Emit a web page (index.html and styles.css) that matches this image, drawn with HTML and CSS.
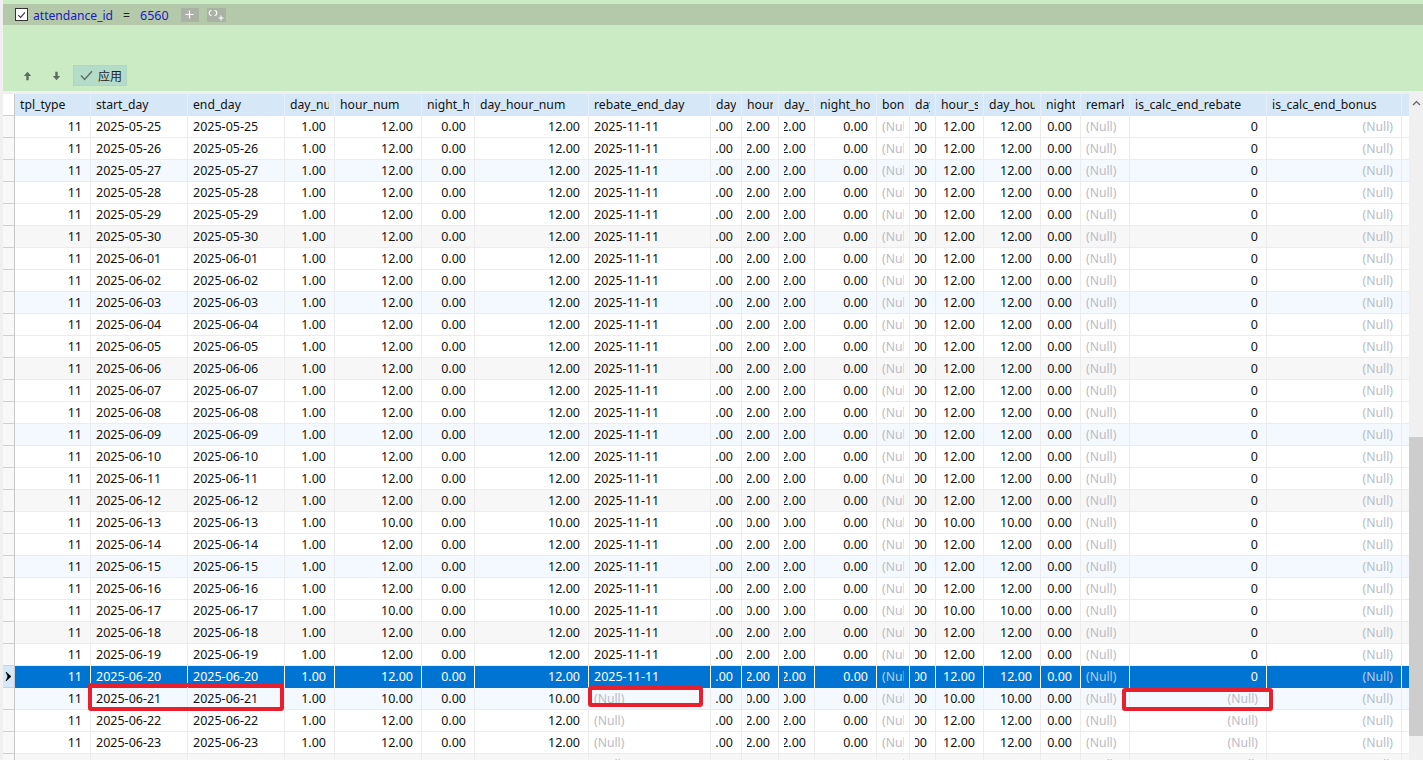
FILE: index.html
```html
<!DOCTYPE html>
<html lang="zh">
<head>
<meta charset="utf-8">
<title>attendance</title>
<link rel="stylesheet" href="styles.css">
</head>
<body>
<div class="page">
<section class="filter">
<div class="cond">
<span class="check"><svg width="12" height="12" viewBox="0 0 12 12"><path d="M2.5 6.2 5 8.6 9.8 3.2" fill="none" stroke="#333" stroke-width="1.2"/></svg></span>
<span class="field">attendance_id</span>
<span class="op">=</span>
<span class="val">6560</span>
<span class="mini"><svg width="9" height="9" viewBox="0 0 9 9"><path d="M4.5 0.5v8M0.5 4.5h8" stroke="#fff" stroke-width="1.2"/></svg></span>
<span class="mini wide"><svg width="17" height="12" viewBox="0 0 17 12"><path d="M3.5 1.5C1.8 1.5 1.2 2.8 1.2 4s.6 2.5 2.3 2.5M6.5 1.5C8.2 1.5 8.8 2.8 8.8 4S8.2 6.5 6.5 6.5" fill="none" stroke="#fff" stroke-width="1.2"/><path d="M13 6.5v5M10.5 9h5" stroke="#fff" stroke-width="1.1"/></svg></span>
</div>
<div class="actions">
<span class="arrow"><svg width="9" height="10" viewBox="0 0 9 10"><path d="M4.5 0.8 8.2 5H5.7v4.2H3.3V5H.8z" fill="#5d6d5f"/></svg></span>
<span class="arrow"><svg width="9" height="10" viewBox="0 0 9 10"><path d="M4.5 9.2 8.2 5H5.7V.8H3.3V5H.8z" fill="#5d6d5f"/></svg></span>
<span class="apply"><svg width="13" height="11" viewBox="0 0 13 11"><path d="M1 5.6 4.6 9.4 12 1.2" fill="none" stroke="#5f6f66" stroke-width="1.5"/></svg><span class="apply-label">应用</span></span>
</div>
</section>
<section class="table-wrap">
<div class="table">
<div class="row head"><span></span><span>tpl_type</span><span>start_day</span><span>end_day</span><span>day_num</span><span>hour_num</span><span>night_hour</span><span>day_hour_num</span><span>rebate_end_day</span><span>day_num</span><span>hour_num</span><span>day_hour</span><span>night_hour_num</span><span>bonus</span><span>day</span><span>hour_sum</span><span>day_hour_sum</span><span>night_hour</span><span>remark</span><span>is_calc_end_rebate</span><span>is_calc_end_bonus</span></div>
<div class="row"><span></span><span>11</span><span>2025-05-25</span><span>2025-05-25</span><span>1.00</span><span>12.00</span><span>0.00</span><span>12.00</span><span>2025-11-11</span><span>1.00</span><span>12.00</span><span>12.00</span><span>0.00</span><span class="n">(Null)</span><span>1.00</span><span>12.00</span><span>12.00</span><span>0.00</span><span class="n">(Null)</span><span>0</span><span class="n">(Null)</span></div>
<div class="row"><span></span><span>11</span><span>2025-05-26</span><span>2025-05-26</span><span>1.00</span><span>12.00</span><span>0.00</span><span>12.00</span><span>2025-11-11</span><span>1.00</span><span>12.00</span><span>12.00</span><span>0.00</span><span class="n">(Null)</span><span>1.00</span><span>12.00</span><span>12.00</span><span>0.00</span><span class="n">(Null)</span><span>0</span><span class="n">(Null)</span></div>
<div class="row blue"><span></span><span>11</span><span>2025-05-27</span><span>2025-05-27</span><span>1.00</span><span>12.00</span><span>0.00</span><span>12.00</span><span>2025-11-11</span><span>1.00</span><span>12.00</span><span>12.00</span><span>0.00</span><span class="n">(Null)</span><span>1.00</span><span>12.00</span><span>12.00</span><span>0.00</span><span class="n">(Null)</span><span>0</span><span class="n">(Null)</span></div>
<div class="row"><span></span><span>11</span><span>2025-05-28</span><span>2025-05-28</span><span>1.00</span><span>12.00</span><span>0.00</span><span>12.00</span><span>2025-11-11</span><span>1.00</span><span>12.00</span><span>12.00</span><span>0.00</span><span class="n">(Null)</span><span>1.00</span><span>12.00</span><span>12.00</span><span>0.00</span><span class="n">(Null)</span><span>0</span><span class="n">(Null)</span></div>
<div class="row"><span></span><span>11</span><span>2025-05-29</span><span>2025-05-29</span><span>1.00</span><span>12.00</span><span>0.00</span><span>12.00</span><span>2025-11-11</span><span>1.00</span><span>12.00</span><span>12.00</span><span>0.00</span><span class="n">(Null)</span><span>1.00</span><span>12.00</span><span>12.00</span><span>0.00</span><span class="n">(Null)</span><span>0</span><span class="n">(Null)</span></div>
<div class="row grey"><span></span><span>11</span><span>2025-05-30</span><span>2025-05-30</span><span>1.00</span><span>12.00</span><span>0.00</span><span>12.00</span><span>2025-11-11</span><span>1.00</span><span>12.00</span><span>12.00</span><span>0.00</span><span class="n">(Null)</span><span>1.00</span><span>12.00</span><span>12.00</span><span>0.00</span><span class="n">(Null)</span><span>0</span><span class="n">(Null)</span></div>
<div class="row"><span></span><span>11</span><span>2025-06-01</span><span>2025-06-01</span><span>1.00</span><span>12.00</span><span>0.00</span><span>12.00</span><span>2025-11-11</span><span>1.00</span><span>12.00</span><span>12.00</span><span>0.00</span><span class="n">(Null)</span><span>1.00</span><span>12.00</span><span>12.00</span><span>0.00</span><span class="n">(Null)</span><span>0</span><span class="n">(Null)</span></div>
<div class="row"><span></span><span>11</span><span>2025-06-02</span><span>2025-06-02</span><span>1.00</span><span>12.00</span><span>0.00</span><span>12.00</span><span>2025-11-11</span><span>1.00</span><span>12.00</span><span>12.00</span><span>0.00</span><span class="n">(Null)</span><span>1.00</span><span>12.00</span><span>12.00</span><span>0.00</span><span class="n">(Null)</span><span>0</span><span class="n">(Null)</span></div>
<div class="row blue"><span></span><span>11</span><span>2025-06-03</span><span>2025-06-03</span><span>1.00</span><span>12.00</span><span>0.00</span><span>12.00</span><span>2025-11-11</span><span>1.00</span><span>12.00</span><span>12.00</span><span>0.00</span><span class="n">(Null)</span><span>1.00</span><span>12.00</span><span>12.00</span><span>0.00</span><span class="n">(Null)</span><span>0</span><span class="n">(Null)</span></div>
<div class="row"><span></span><span>11</span><span>2025-06-04</span><span>2025-06-04</span><span>1.00</span><span>12.00</span><span>0.00</span><span>12.00</span><span>2025-11-11</span><span>1.00</span><span>12.00</span><span>12.00</span><span>0.00</span><span class="n">(Null)</span><span>1.00</span><span>12.00</span><span>12.00</span><span>0.00</span><span class="n">(Null)</span><span>0</span><span class="n">(Null)</span></div>
<div class="row"><span></span><span>11</span><span>2025-06-05</span><span>2025-06-05</span><span>1.00</span><span>12.00</span><span>0.00</span><span>12.00</span><span>2025-11-11</span><span>1.00</span><span>12.00</span><span>12.00</span><span>0.00</span><span class="n">(Null)</span><span>1.00</span><span>12.00</span><span>12.00</span><span>0.00</span><span class="n">(Null)</span><span>0</span><span class="n">(Null)</span></div>
<div class="row grey"><span></span><span>11</span><span>2025-06-06</span><span>2025-06-06</span><span>1.00</span><span>12.00</span><span>0.00</span><span>12.00</span><span>2025-11-11</span><span>1.00</span><span>12.00</span><span>12.00</span><span>0.00</span><span class="n">(Null)</span><span>1.00</span><span>12.00</span><span>12.00</span><span>0.00</span><span class="n">(Null)</span><span>0</span><span class="n">(Null)</span></div>
<div class="row"><span></span><span>11</span><span>2025-06-07</span><span>2025-06-07</span><span>1.00</span><span>12.00</span><span>0.00</span><span>12.00</span><span>2025-11-11</span><span>1.00</span><span>12.00</span><span>12.00</span><span>0.00</span><span class="n">(Null)</span><span>1.00</span><span>12.00</span><span>12.00</span><span>0.00</span><span class="n">(Null)</span><span>0</span><span class="n">(Null)</span></div>
<div class="row"><span></span><span>11</span><span>2025-06-08</span><span>2025-06-08</span><span>1.00</span><span>12.00</span><span>0.00</span><span>12.00</span><span>2025-11-11</span><span>1.00</span><span>12.00</span><span>12.00</span><span>0.00</span><span class="n">(Null)</span><span>1.00</span><span>12.00</span><span>12.00</span><span>0.00</span><span class="n">(Null)</span><span>0</span><span class="n">(Null)</span></div>
<div class="row blue"><span></span><span>11</span><span>2025-06-09</span><span>2025-06-09</span><span>1.00</span><span>12.00</span><span>0.00</span><span>12.00</span><span>2025-11-11</span><span>1.00</span><span>12.00</span><span>12.00</span><span>0.00</span><span class="n">(Null)</span><span>1.00</span><span>12.00</span><span>12.00</span><span>0.00</span><span class="n">(Null)</span><span>0</span><span class="n">(Null)</span></div>
<div class="row"><span></span><span>11</span><span>2025-06-10</span><span>2025-06-10</span><span>1.00</span><span>12.00</span><span>0.00</span><span>12.00</span><span>2025-11-11</span><span>1.00</span><span>12.00</span><span>12.00</span><span>0.00</span><span class="n">(Null)</span><span>1.00</span><span>12.00</span><span>12.00</span><span>0.00</span><span class="n">(Null)</span><span>0</span><span class="n">(Null)</span></div>
<div class="row"><span></span><span>11</span><span>2025-06-11</span><span>2025-06-11</span><span>1.00</span><span>12.00</span><span>0.00</span><span>12.00</span><span>2025-11-11</span><span>1.00</span><span>12.00</span><span>12.00</span><span>0.00</span><span class="n">(Null)</span><span>1.00</span><span>12.00</span><span>12.00</span><span>0.00</span><span class="n">(Null)</span><span>0</span><span class="n">(Null)</span></div>
<div class="row grey"><span></span><span>11</span><span>2025-06-12</span><span>2025-06-12</span><span>1.00</span><span>12.00</span><span>0.00</span><span>12.00</span><span>2025-11-11</span><span>1.00</span><span>12.00</span><span>12.00</span><span>0.00</span><span class="n">(Null)</span><span>1.00</span><span>12.00</span><span>12.00</span><span>0.00</span><span class="n">(Null)</span><span>0</span><span class="n">(Null)</span></div>
<div class="row"><span></span><span>11</span><span>2025-06-13</span><span>2025-06-13</span><span>1.00</span><span>10.00</span><span>0.00</span><span>10.00</span><span>2025-11-11</span><span>1.00</span><span>10.00</span><span>10.00</span><span>0.00</span><span class="n">(Null)</span><span>1.00</span><span>10.00</span><span>10.00</span><span>0.00</span><span class="n">(Null)</span><span>0</span><span class="n">(Null)</span></div>
<div class="row"><span></span><span>11</span><span>2025-06-14</span><span>2025-06-14</span><span>1.00</span><span>12.00</span><span>0.00</span><span>12.00</span><span>2025-11-11</span><span>1.00</span><span>12.00</span><span>12.00</span><span>0.00</span><span class="n">(Null)</span><span>1.00</span><span>12.00</span><span>12.00</span><span>0.00</span><span class="n">(Null)</span><span>0</span><span class="n">(Null)</span></div>
<div class="row blue"><span></span><span>11</span><span>2025-06-15</span><span>2025-06-15</span><span>1.00</span><span>12.00</span><span>0.00</span><span>12.00</span><span>2025-11-11</span><span>1.00</span><span>12.00</span><span>12.00</span><span>0.00</span><span class="n">(Null)</span><span>1.00</span><span>12.00</span><span>12.00</span><span>0.00</span><span class="n">(Null)</span><span>0</span><span class="n">(Null)</span></div>
<div class="row"><span></span><span>11</span><span>2025-06-16</span><span>2025-06-16</span><span>1.00</span><span>12.00</span><span>0.00</span><span>12.00</span><span>2025-11-11</span><span>1.00</span><span>12.00</span><span>12.00</span><span>0.00</span><span class="n">(Null)</span><span>1.00</span><span>12.00</span><span>12.00</span><span>0.00</span><span class="n">(Null)</span><span>0</span><span class="n">(Null)</span></div>
<div class="row"><span></span><span>11</span><span>2025-06-17</span><span>2025-06-17</span><span>1.00</span><span>10.00</span><span>0.00</span><span>10.00</span><span>2025-11-11</span><span>1.00</span><span>10.00</span><span>10.00</span><span>0.00</span><span class="n">(Null)</span><span>1.00</span><span>10.00</span><span>10.00</span><span>0.00</span><span class="n">(Null)</span><span>0</span><span class="n">(Null)</span></div>
<div class="row grey"><span></span><span>11</span><span>2025-06-18</span><span>2025-06-18</span><span>1.00</span><span>12.00</span><span>0.00</span><span>12.00</span><span>2025-11-11</span><span>1.00</span><span>12.00</span><span>12.00</span><span>0.00</span><span class="n">(Null)</span><span>1.00</span><span>12.00</span><span>12.00</span><span>0.00</span><span class="n">(Null)</span><span>0</span><span class="n">(Null)</span></div>
<div class="row"><span></span><span>11</span><span>2025-06-19</span><span>2025-06-19</span><span>1.00</span><span>12.00</span><span>0.00</span><span>12.00</span><span>2025-11-11</span><span>1.00</span><span>12.00</span><span>12.00</span><span>0.00</span><span class="n">(Null)</span><span>1.00</span><span>12.00</span><span>12.00</span><span>0.00</span><span class="n">(Null)</span><span>0</span><span class="n">(Null)</span></div>
<div class="row sel"><span><svg width="7" height="11" viewBox="0 0 7 11"><path d="M1 1 6 5.5 1 10 2.8 5.5z" fill="#000" stroke="#000" stroke-width=".6"/></svg></span><span>11</span><span>2025-06-20</span><span>2025-06-20</span><span>1.00</span><span>12.00</span><span>0.00</span><span>12.00</span><span>2025-11-11</span><span>1.00</span><span>12.00</span><span>12.00</span><span>0.00</span><span class="n">(Null)</span><span>1.00</span><span>12.00</span><span>12.00</span><span>0.00</span><span class="n">(Null)</span><span>0</span><span class="n">(Null)</span></div>
<div class="row blue"><span></span><span>11</span><span>2025-06-21</span><span>2025-06-21</span><span>1.00</span><span>10.00</span><span>0.00</span><span>10.00</span><span class="n">(Null)</span><span>1.00</span><span>10.00</span><span>10.00</span><span>0.00</span><span class="n">(Null)</span><span>1.00</span><span>10.00</span><span>10.00</span><span>0.00</span><span class="n">(Null)</span><span class="n">(Null)</span><span class="n">(Null)</span></div>
<div class="row"><span></span><span>11</span><span>2025-06-22</span><span>2025-06-22</span><span>1.00</span><span>12.00</span><span>0.00</span><span>12.00</span><span class="n">(Null)</span><span>1.00</span><span>12.00</span><span>12.00</span><span>0.00</span><span class="n">(Null)</span><span>1.00</span><span>12.00</span><span>12.00</span><span>0.00</span><span class="n">(Null)</span><span class="n">(Null)</span><span class="n">(Null)</span></div>
<div class="row"><span></span><span>11</span><span>2025-06-23</span><span>2025-06-23</span><span>1.00</span><span>12.00</span><span>0.00</span><span>12.00</span><span class="n">(Null)</span><span>1.00</span><span>12.00</span><span>12.00</span><span>0.00</span><span class="n">(Null)</span><span>1.00</span><span>12.00</span><span>12.00</span><span>0.00</span><span class="n">(Null)</span><span class="n">(Null)</span><span class="n">(Null)</span></div>
<div class="row grey"><span></span><span>11</span><span>2025-06-24</span><span>2025-06-24</span><span>1.00</span><span>12.00</span><span>0.00</span><span>12.00</span><span class="n">(Null)</span><span>1.00</span><span>12.00</span><span>12.00</span><span>0.00</span><span class="n">(Null)</span><span>1.00</span><span>12.00</span><span>12.00</span><span>0.00</span><span class="n">(Null)</span><span class="n">(Null)</span><span class="n">(Null)</span></div>
</div>
<div class="scrollbar">
<span class="up"><svg width="9" height="6" viewBox="0 0 9 6"><path d="M1 5 4.5 1.5 8 5" fill="none" stroke="#606060" stroke-width="1.2"/></svg></span>
<span class="thumb"></span>
</div>
</section>
<div class="mark mark-a"></div>
<div class="mark mark-b"></div>
<div class="mark mark-c"></div>
</div>
</body>
</html>
```

FILE: styles.css
```css
* { box-sizing: border-box; }
html, body { margin: 0; height: 760px; overflow: hidden; background: #f0f0f0; }
.page {
  position: relative;
  width: 1423px;
  height: 760px;
  overflow: hidden;
  padding-left: 3px;
  font: 12.5px/21px "Noto Sans", "Noto Sans CJK SC", sans-serif;
  color: #111;
}

/* filter panel */
.filter {
  height: 91px;
  padding-top: 4px;
  background: #cbebc5;
  display: flex;
  flex-direction: column;
}
.cond {
  height: 21px;
  background: #b3c9a9;
  display: flex;
  align-items: center;
  padding-left: 12px;
  font-size: 12.1px;
}
.check {
  width: 13px;
  height: 13px;
  border: 1px solid #333;
  background: #fff;
  display: flex;
  align-items: center;
  justify-content: center;
  margin-right: 5px;
}
.field, .op, .val { color: #1a1ac4; padding-top: 1px; }
.op { margin-left: 10px; color: #222; }
.val { margin-left: 10px; font-size: 12.5px; }
.mini {
  width: 18px;
  height: 14px;
  background: #a9b2a5;
  display: flex;
  align-items: center;
  justify-content: center;
  margin-left: 12px;
}
.mini.wide { width: 19px; margin-left: 8px; }
.actions {
  margin-top: auto;
  height: 21px;
  margin-bottom: 5px;
  display: flex;
  align-items: center;
  padding-left: 20px;
}
.arrow { width: 9px; height: 10px; display: flex; margin-right: 20px; }
.arrow + .apply { margin-left: -8px; }
.apply {
  width: 54px;
  height: 21px;
  background: #b4dcc9;
  border: 1px solid #aad8c6;
  display: flex;
  align-items: center;
  gap: 5px;
  padding-left: 6px;
  font-size: 12px;
  color: #222;
}
.apply-label { padding-top: 1px; }

/* data grid */
.table-wrap {
  display: flex;
  height: 669px;
  margin-top: 3px;
  overflow: hidden;
}
.table { width: 1406px; background: #fff; flex: none; }
.row {
  display: grid;
  grid-template-columns: 12px 76px 97px 97px 50px 87px 53px 114px 122px 31px 37px 36px 62px 33px 26px 48px 57px 40px 49px 137px 135px;
  height: 22px;
  border-bottom: 1px solid #ececec;
  white-space: nowrap;
}
.row > span {
  display: flex;
  justify-content: flex-end;
  padding: 0 8px 0 5px;
  border-right: 1px solid #ececec;
  overflow: clip;
  overflow-clip-margin: content-box;
}
.row > span:first-child {
  background: #f8f8f8;
  border-right-color: #c8c8c8;
  border-bottom: 1px solid #d0d0d0;
  height: 22px;
  padding: 0;
  align-items: center;
  justify-content: center;
}
.row > span:nth-child(3),
.row > span:nth-child(4),
.row > span:nth-child(9),
.row > span:nth-child(14),
.row > span:nth-child(19) { justify-content: flex-start; padding-right: 5px; }
.row > .n { color: #b9bcc6; font-size: 12.2px; }
.blue { background: #f3f9fe; }
.grey { background: #f7f7f7; }

.head { background: #d6e8f7; border-bottom: 0; font-size: 12.2px; }
.head > span {
  justify-content: flex-start;
  padding-right: 5px;
  border-right-color: #e6eff7;
}
.head > span:first-child { background: #fff; border-bottom: 1px solid #d0d0d0; }

.sel { background: #0074d3; color: #fff; border-bottom-color: #0074d3; }
.sel > span { border-right-color: #fff; }
.sel > span:first-child { background: #d6e8f7; }
.row.sel > .n { color: #b9cfe8; }

/* scrollbar */
.scrollbar {
  margin-left: 0;
  width: 14px;
  background: #f0f0f0;
  display: flex;
  flex-direction: column;
}
.up { height: 17px; display: flex; align-items: center; justify-content: center; }
.thumb { margin-top: 326px; height: 299px; background: #cdcdcd; flex: none; }

/* annotation boxes drawn over the grid */
.mark {
  position: absolute;
  border: 4px solid #e8202e;
  border-radius: 3px;
}
.mark-a { left: 88px; top: 683px; width: 196px; height: 28px; }
.mark-b { left: 588px; top: 686px; width: 115px; height: 21px; }
.mark-c { left: 1122px; top: 688px; width: 151px; height: 23px; }
```
